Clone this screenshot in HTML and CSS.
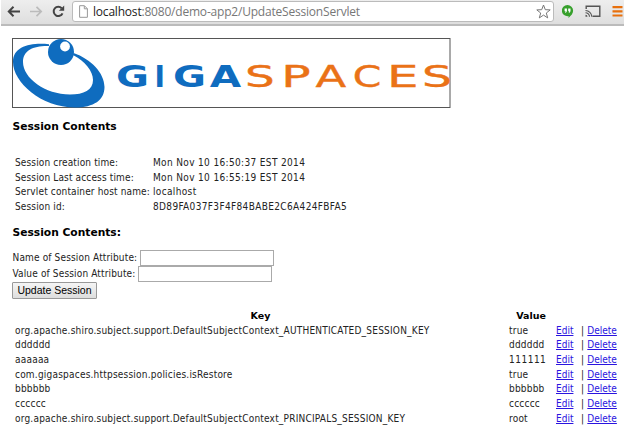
FILE: index.html
```html
<!DOCTYPE html>
<html lang="en">
<head>
<meta charset="utf-8">
<title>Session Contents</title>
<link rel="stylesheet" href="styles.css">
</head>
<body>
<header class="toolbar">
  <svg class="nav" width="70" height="24" viewBox="0 0 70 24">
    <path d="M20 11.500H9M13.500 6.800 8.800 11.500l4.700 4.700" fill="none" stroke="#444" stroke-width="2"/>
    <path d="M30 11.500h10.500M36.500 6.800l4.700 4.700-4.700 4.700" fill="none" stroke="#bbb" stroke-width="1.700"/>
    <path d="M62.500 13.300a4.600 4.600 0 1 1-.8-5" fill="none" stroke="#444" stroke-width="2"/>
    <path d="M64.200 5.500v5.300h-5.300z" fill="#444"/>
  </svg>
  <div class="address">
    <svg width="9" height="13" viewBox="0 0 9 13"><path d="M.6.7h4.800l3 3v8.600H.6zM5.300.8v3h3" fill="#fff" stroke="#999" stroke-width="1"/></svg>
    <span class="url"><span class="host">localhost</span>:8080/demo-app2/UpdateSessionServlet</span>
    <svg class="star" width="15" height="15" viewBox="0 0 15 15"><path d="m7.500 1 1.800 4.700 4.900.2-3.900 3.100 1.400 4.900-4.200-2.800-4.200 2.800L4.700 9 .8 5.900l4.900-.2z" fill="#fff" stroke="#777" stroke-width="1"/></svg>
  </div>
  <svg class="tools" width="62" height="24" viewBox="0 0 62 24">
    <path d="M5.500 5a5.600 5.600 0 0 1 5.600 5.600c0 3-1.800 4.900-4.600 7.400v-1.900a5.600 5.600 0 1 1-1-11.100z" fill="#37a02c"/>
    <path d="M2.600 8.600h2.300v2.600l-1 1.500h-.8l.5-1.500h-1zM6.200 8.600h2.300v2.600l-1 1.500h-.8l.5-1.500h-1z" fill="#fff"/>
    <path d="M24.200 9V6.200h13.600v10h-7.300" fill="none" stroke="#555" stroke-width="1.400"/>
    <path d="M23.500 10.500a6.500 6.500 0 0 1 6.300 6.300M23.500 12.800a4 4 0 0 1 4 4" fill="none" stroke="#555" stroke-width="1.100"/>
    <path d="M23.500 14.700a2 2 0 0 1 2 2h-2z" fill="#555"/>
    <path d="M50.500 7.200h10M50.500 11.400h10M50.500 15.500h10" stroke="#e8700c" stroke-width="2.200"/>
  </svg>
</header>
<main>
  <svg class="logo" width="439" height="71" viewBox="12 38 439 71">
    <rect x="12.500" y="38.500" width="437.500" height="69" fill="#fff" stroke="#555"/>
    <g fill="#0f6cbf">
      <path fill-rule="evenodd" d="M49 44.300C31 42.500 13 46 13 62C13 82 41 107.500 75 107.500C94 107.500 104.500 100 104.500 87C104.500 73 91 59 73.500 53L73 55C85 61 93 71 93 80C93 90 84 94.500 70 94.500C45 94.500 23 78 23 62C23 50 34 45.500 49 46z"/>
      <circle cx="61" cy="52" r="13"/>
    </g>
    <circle cx="65" cy="46.500" r="4.900" fill="#fff"/>
    <g class="giga">
      <text x="116" y="86.500" textLength="33" lengthAdjust="spacingAndGlyphs">G</text>
      <text x="154.500" y="86.500" textLength="10.500" lengthAdjust="spacingAndGlyphs">I</text>
      <text x="173" y="86.500" textLength="33" lengthAdjust="spacingAndGlyphs">G</text>
      <text x="209.800" y="86.500" textLength="31.400" lengthAdjust="spacingAndGlyphs">A</text>
    </g>
    <g class="spaces">
      <text x="244.900" y="86.500" textLength="29.700" lengthAdjust="spacingAndGlyphs">S</text>
      <text x="281.200" y="86.500" textLength="29.400" lengthAdjust="spacingAndGlyphs">P</text>
      <text x="315.600" y="86.500" textLength="30.700" lengthAdjust="spacingAndGlyphs">A</text>
      <text x="352.700" y="86.500" textLength="28.600" lengthAdjust="spacingAndGlyphs">C</text>
      <text x="387.100" y="86.500" textLength="31.500" lengthAdjust="spacingAndGlyphs">E</text>
      <text x="421.900" y="86.500" textLength="30" lengthAdjust="spacingAndGlyphs">S</text>
    </g>
  </svg>
  <h3 class="first">Session Contents</h3>
  <dl class="info">
    <dt>Session creation time:</dt><dd>Mon Nov 10 16:50:37 EST 2014</dd>
    <dt>Session Last access time:</dt><dd>Mon Nov 10 16:55:19 EST 2014</dd>
    <dt>Servlet container host name:</dt><dd>localhost</dd>
    <dt>Session id:</dt><dd>8D89FA037F3F4F84BABE2C6A424FBFA5</dd>
  </dl>
  <h3 class="second">Session Contents:</h3>
  <form>
    <label class="field"><span>Name of Session Attribute:</span><input type="text"></label>
    <label class="field value"><span>Value of Session Attribute:</span><input type="text"></label>
    <button type="button">Update Session</button>
  </form>
  <div class="attrs">
    <b class="key">Key</b><b class="val">Value</b><span></span><span></span>
    <span>org.apache.shiro.subject.support.DefaultSubjectContext_AUTHENTICATED_SESSION_KEY</span><span>true</span><a href="#">Edit</a><span>| <a href="#">Delete</a></span>
    <span>dddddd</span><span>dddddd</span><a href="#">Edit</a><span>| <a href="#">Delete</a></span>
    <span>aaaaaa</span><span class="digits">111111</span><a href="#">Edit</a><span>| <a href="#">Delete</a></span>
    <span>com.gigaspaces.httpsession.policies.isRestore</span><span>true</span><a href="#">Edit</a><span>| <a href="#">Delete</a></span>
    <span>bbbbbb</span><span>bbbbbb</span><a href="#">Edit</a><span>| <a href="#">Delete</a></span>
    <span>cccccc</span><span>cccccc</span><a href="#">Edit</a><span>| <a href="#">Delete</a></span>
    <span>org.apache.shiro.subject.support.DefaultSubjectContext_PRINCIPALS_SESSION_KEY</span><span>root</span><a href="#">Edit</a><span>| <a href="#">Delete</a></span>
  </div>
</main>
</body>
</html>
```
FILE: styles.css
```css
* { box-sizing: border-box; }
body { margin: 0; width: 625px; height: 445px; overflow: hidden; background: #fff; color: #222; font: 10px/14.650px "DejaVu Sans Condensed", "DejaVu Sans", sans-serif; letter-spacing: .21px; }
svg { display: block; flex: none; }
.toolbar { display: flex; width: 623px; height: 26px; margin-left: 1px; background: linear-gradient(#eee, #dedede); border-bottom: 2px solid #bbb; overflow: hidden; }
.nav { margin-left: -1px; }
.address { display: flex; align-items: center; width: 483px; height: 21px; margin-top: 1px; margin-left: 2px; padding: 0 2px 0 6px; background: #fff; border: 1px solid #bbb; border-radius: 3px; }
.url { margin-left: 5px; font: 12px/19px "Open Sans", sans-serif; letter-spacing: -.2px; color: #777; white-space: nowrap; }
.host { color: #222; }
.star { margin-left: auto; }
.tools { margin-left: 8px; }
main { padding: 12px 0 0 12px; }
.giga, .spaces { font-family: "DejaVu Sans", sans-serif; font-size: 31px; letter-spacing: 0; }
.giga { font-weight: bold; fill: #0f6cbf; }
.spaces { fill: #ea7217; stroke: #ea7217; stroke-width: .4px; }
h3 { margin: 0; padding-left: .5px; font: bold 10.700px/14px "DejaVu Sans", sans-serif; letter-spacing: 0; color: #000; }
.first { margin-top: 11px; }
.info { display: grid; grid-template-columns: 138px 1fr; grid-auto-rows: 14.650px; margin: 22px 0 0 3px; white-space: nowrap; letter-spacing: .14px; }
.info dd { margin: 0; letter-spacing: .35px; }
.second { margin-top: 11px; }
form { margin-top: 10px; }
.field { display: flex; align-items: center; height: 16px; white-space: nowrap; letter-spacing: .15px; }
.field span { width: 125px; margin-right: 3px; padding: 1px 0 0 .5px; }
.field.value span { width: 123px; }
.field input { width: 134px; height: 16px; margin: 0; padding: 0; border: 1px solid #aaa; background: #fff; }
button { display: block; width: 85px; height: 17px; margin: 0; padding: 0; border: 1px solid #999; border-radius: 1px; background: linear-gradient(#f5f5f5, #ddd); font: 10.500px/14px "Liberation Sans", sans-serif; color: #000; }
.attrs { display: grid; grid-template-columns: 494px 47px 25px 1fr; grid-auto-rows: 14.700px; margin: 10.400px 0 0 3px; white-space: nowrap; }
.attrs b { color: #000; text-align: center; font-family: "DejaVu Sans", sans-serif; font-size: 9.500px; letter-spacing: 0; }
.attrs .key { padding-right: 3px; }
.attrs .val { width: 44px; }
.digits { letter-spacing: .5px; }
a { color: #2a14e0; letter-spacing: 0; }
```
